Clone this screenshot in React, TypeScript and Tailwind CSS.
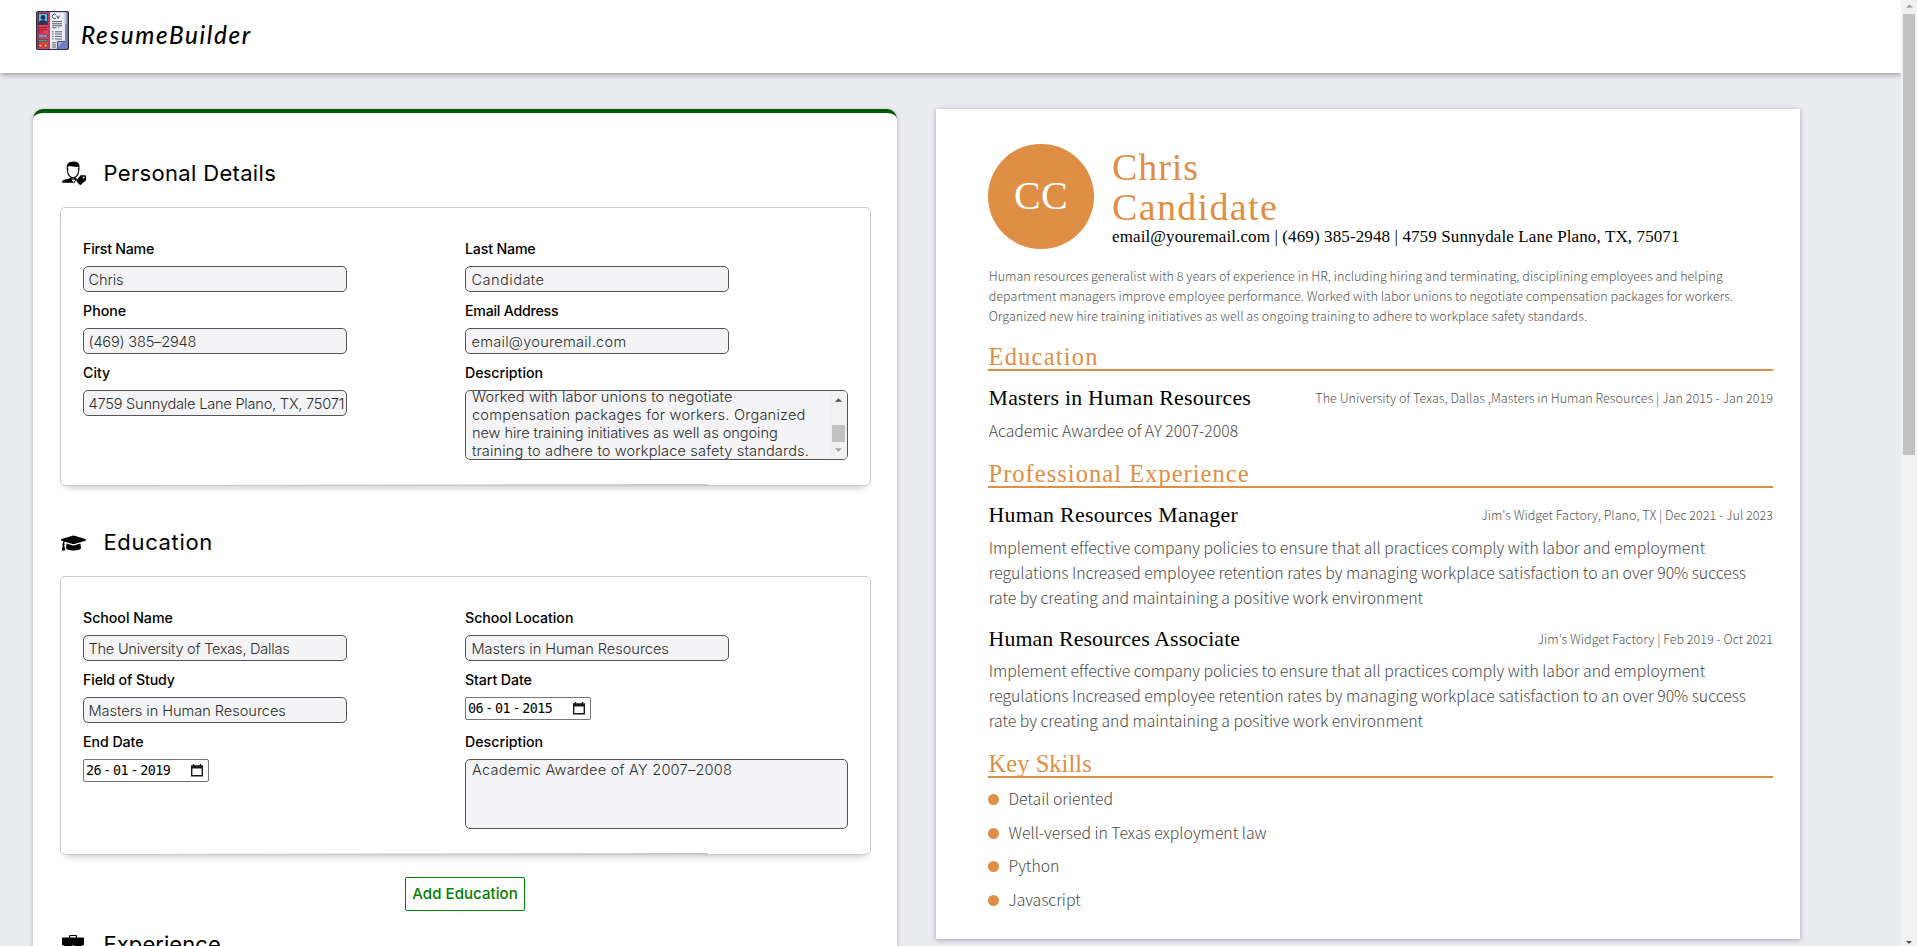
import React, { ReactNode } from 'react';
import { FaGraduationCap } from 'react-icons/fa';

function Logo() {
  return (
    <svg className="h-[39px] w-[33px] shrink-0" viewBox="0 0 33 39">
      <rect x="0.6" y="0.6" width="31.8" height="37.8" rx="1.2" fill="#7c85a6" stroke="#2f2b45" strokeWidth="1.2" />
      <rect x="13" y="1.2" width="16" height="36.6" fill="#eceff8" />
      <path d="M28.2 1.2h2.2v12h-2.2z" fill="#c3cadf" />
      <path d="M1.2 1.2h12.4v36.6H1.2z" fill="#ee3f58" />
      <path d="M1.2 1.2h2v36.6h-2z" fill="#b02a4c" />
      <path d="M13.2 1v37" stroke="#6a2747" strokeWidth="0.9" />
      <rect x="2.6" y="2.6" width="8.8" height="11" fill="#5fc0ea" stroke="#2f2b45" strokeWidth="0.8" />
      <circle cx="7" cy="6.4" r="2.4" fill="#2b3052" />
      <path d="M3 13.4v-1.6c0-2 2-2.8 4-2.8s4 .8 4 2.8v1.6z" fill="#2b3052" />
      <path d="M2.4 16.6h8.8M2.4 18.8h8.8M2.4 21h5.4" stroke="#7a1d3c" strokeWidth="0.9" />
      <rect x="2.6" y="24" width="8.6" height="2" fill="#6fd3ee" stroke="#2f2b45" strokeWidth="0.5" />
      <rect x="2.6" y="28.6" width="8.6" height="2" fill="#3fae77" stroke="#2f2b45" strokeWidth="0.5" />
      <circle cx="4.4" cy="34.6" r="1.7" fill="#f2b84b" stroke="#5c2038" strokeWidth="0.7" />
      <circle cx="9.6" cy="34.6" r="1.7" fill="#f2b84b" stroke="#5c2038" strokeWidth="0.7" />
      <path d="M20 3.6a2.3 2.3 0 1 0 0 3.6M20.8 4.6l1.3 3 1.3-3" fill="none" stroke="#3a3a4a" strokeWidth="0.9" />
      <path d="M16 10.6h10M16 12.8h10M16 14.8h10M16 16.8h4.4M22 16.8h1.2M16 20.8h1.6M19 20.8h7M16 23h1.6M19 23h7M16 25.4h1.6M19 25.4h7M16 28h1.6M19 28h7M16 31.8h4M16 34h4M16 36h4" stroke="#4a4a5a" strokeWidth="0.9" />
      <path d="M21.4 38v-7.6h7.6z" fill="#8fa4e4" stroke="#2f2b45" strokeWidth="0.8" strokeLinejoin="round" />
      <path d="M29 30.4V38h-7.6z" fill="#6d80cf" />
    </svg>
  );
}

function PersonTagIcon() {
  return (
    <svg className="-mt-[6px] h-6 w-6" viewBox="0 0 24 24">
      <path d="M5.6 6.8v3.4c0 2.8 2.4 6.6 5.4 6.6s5.6-3.8 5.6-6.6V6.8" fill="none" stroke="#000" strokeWidth="1.1" />
      <path d="M5 9.4C4.2 4.6 5.2 1.6 8.6 1c2.4-1 5.6-.8 7.2.6 1.8 1 2 4.4 1.4 7.8l-.8-3.6c-2.6.4-6.6-.2-8.8-.8L6 5.8z" />
      <path d="M0 21.8c0-2.6 1.6-3.2 4.2-3.5 2-.3 3.8-.7 4.6-1.7 1.4 1.3 3 1.3 4.4 0 .6.8 1.2 1.2 2 1.4L13 20.4v1.4z" />
      <path d="M9.4 18.4l2 3.2 1.9-2.8" fill="#fff" />
      <path d="M18.6 14.2h4.6c.4 0 .8.4.8.8v4.2l-5.2 4.5c-.4.3-.8.3-1.1 0l-3.2-3.4c-.3-.3-.3-.8 0-1.1z" />
      <circle cx="21.6" cy="16.5" r="0.9" fill="#fff" />
    </svg>
  );
}

function BriefcaseIcon() {
  return (
    <svg className="-mt-[5px] h-[20px] w-[22px]" viewBox="0 0 22 20">
      <path d="M7.6 3V1.2c0-.4.3-.7.7-.7h5.4c.4 0 .7.3.7.7V3" fill="none" stroke="#000" strokeWidth="1.2" />
      <path d="M1 2.4h20c.6 0 1 .4 1 1v6.4c-3.2 1.4-6.3 2.2-9.6 2.4V10.400H9.600v1.800C6.300 12 3.200 11.200 0 9.800V3.400c0-.6.400-1 1-1z" />
      <path d="M0 11.200c3.200 1.400 6.300 2.100 9.600 2.300v1.300h2.800v-1.300c3.300-.2 6.400-.9 9.600-2.300V18c0 .6-.4 1-1 1H1c-.6 0-1-.4-1-1z" />
    </svg>
  );
}

function CalendarIcon() {
  return (
    <svg className="h-[13px] w-3" viewBox="0 0 12 13">
      <path d="M0.7 2.2h10.6v9.6H.7z" fill="none" stroke="#1a1a1a" strokeWidth="1.4" />
      <path d="M0 1.4h12v3H0zM1.8 0h1.4v2H1.8zM8.8 0h1.4v2H8.8z" fill="#1a1a1a" />
    </svg>
  );
}

function Arrow({ down, className }: { down?: boolean; className: string }) {
  return (
    <svg className={className} viewBox="0 0 8 4">
      <path d={down ? 'M0 0h8L4 4z' : 'M0 4h8L4 0z'} fill="currentColor" />
    </svg>
  );
}

function SectionTitle({ icon, children, className }: { icon: ReactNode; children: ReactNode; className: string }) {
  return (
    <h2 className={`flex h-[30px] items-center text-[22px] leading-[30px] text-black ${className}`}>
      <span className="mt-1.5 ml-[2px] flex w-[41.5px] shrink-0">{icon}</span>
      {children}
    </h2>
  );
}

function FormBox({ children }: { children: ReactNode }) {
  return (
    <div className="relative h-[279px] rounded-[5px] border border-[#cbcbcb] pt-[31px] pl-[22px] shadow-[0_7px_7px_-6px_rgba(0,0,0,0.25)]">
      <div className="grid grid-cols-[382px_383px] auto-rows-[62px]">{children}</div>
      <div className="absolute bottom-0 left-[80px] h-px w-[567px] bg-linear-to-r from-transparent to-[#c4c4c4]" />
    </div>
  );
}

function Label({ children, tracking }: { children: ReactNode; tracking: string }) {
  return <span className={`mb-[7px] block h-5 text-[14.2px] leading-5 font-[450] whitespace-nowrap text-black ${tracking}`}>{children}</span>;
}

function Field({ label, lt, value, vt, pad = 'pl-[4.5px]' }: { label: string; lt: string; value: string; vt: string; pad?: string }) {
  return (
    <label className="block">
      <Label tracking={lt}>{label}</Label>
      <input
        className={`block h-[26px] w-[264px] rounded-[5px] border border-[#545457] bg-[#f4f4f7] pt-px text-[14.6px] font-light text-[#2e2e2e] outline-none ${pad} ${vt}`}
        defaultValue={value}
      />
    </label>
  );
}

function DateField({ label, lt, parts }: { label: string; lt: string; parts: [string, string, string] }) {
  return (
    <div>
      <Label tracking={lt}>{label}</Label>
      <div className="flex h-[23px] w-[126px] items-center justify-between rounded-[2px] border border-[#767676] bg-white pr-[5px] pl-[2px] text-black">
        <span className="mt-px flex gap-[2.2px] font-['DejaVu_Sans_Mono',monospace] text-[13.4px] tracking-[-0.5px]">
          <span>{parts[0]}</span>
          <span>-</span>
          <span>{parts[1]}</span>
          <span>-</span>
          <span>{parts[2]}</span>
        </span>
        <CalendarIcon />
      </div>
    </div>
  );
}

function TextBox({ lines, offset, scroll }: { lines: [string, string][]; offset: string; scroll?: boolean }) {
  return (
    <div>
      <Label tracking="tracking-[0.02px]">Description</Label>
      <div className="flex h-[70px] w-[383px] justify-between overflow-hidden rounded-[5px] border border-[#545457] bg-[#f4f4f7] text-[14.6px] leading-[18px] font-light text-[#2e2e2e]">
        <div className={`pl-[6px] whitespace-nowrap ${offset}`}>
          {lines.map(([t, c]) => (
            <div key={t} className={c}>
              {t}
            </div>
          ))}
        </div>
        {scroll && (
          <div className="flex w-[17px] flex-col items-center bg-[#f1f1f1]">
            <Arrow className="mt-[7px] h-1 w-[7px] text-[#505050]" />
            <div className="mt-[23px] h-[17px] w-[13px] bg-[#c1c1c1]" />
            <Arrow down className="mt-[6px] h-1 w-[7px] text-[#a3a3a3]" />
          </div>
        )}
      </div>
    </div>
  );
}

function ResumeHeading({ children, className }: { children: ReactNode; className: string }) {
  return (
    <h3 className={`h-[27px] border-b-2 border-[#df8e45] font-['Liberation_Serif',serif] text-[24.5px] leading-[26px] text-[#df8e45] ${className}`}>{children}</h3>
  );
}

function Entry({ title, tt, meta, body, className, bodyClass }: { title: string; tt: string; meta: string; body: string[]; className: string; bodyClass: string }) {
  return (
    <div className={className}>
      <div className="flex h-[26px] justify-between whitespace-nowrap">
        <span className={`pl-[0.5px] font-['Liberation_Serif',serif] text-[21.8px] leading-[26px] text-black ${tt}`}>{title}</span>
        <span className="mt-[3px] text-[12.6px] leading-5 font-light text-[#555]">{meta}</span>
      </div>
      <div className={`pl-[0.7px] text-[15.8px] leading-[25px] font-light tracking-[-0.012px] whitespace-nowrap text-[#484848] ${bodyClass}`}>
        {body.map((l) => (
          <div key={l}>{l}</div>
        ))}
      </div>
    </div>
  );
}

const duties = [
  'Implement effective company policies to ensure that all practices comply with labor and employment',
  'regulations Increased employee retention rates by managing workplace satisfaction to an over 90% success',
  'rate by creating and maintaining a positive work environment',
];

const skills = ['Detail oriented', 'Well-versed in Texas exployment law', 'Python', 'Javascript'];

export default function App() {
  return (
    <div className="flex h-[946px] w-[1917px] overflow-hidden bg-[#ebecf0] font-[Inter,sans-serif]">
      <div className="flex w-[1901px] flex-col overflow-hidden">
        <header className="relative z-10 flex h-[73px] shrink-0 bg-white pt-[11px] pl-9 shadow-[0_1px_6px_rgba(60,40,70,0.55)]">
          <Logo />
          <span className="ml-[12px] pt-[8.5px] font-[Lato,sans-serif] text-[24.2px] leading-[30px] font-medium tracking-[1.65px] text-black italic">ResumeBuilder</span>
        </header>

        <main className="flex items-start gap-[39px] pt-9 pl-[33px]">
          <section className="h-[980px] w-[864px] shrink-0 rounded-[10px] border-t-4 border-[#005a05] bg-white pt-[45px] pr-[26px] pl-[27px] shadow-[0_1px_4px_rgba(60,50,90,0.35)]">
            <SectionTitle className="mb-[19px] tracking-[0.33px]" icon={<PersonTagIcon />}>
              Personal Details
            </SectionTitle>
            <FormBox>
              <Field label="First Name" lt="tracking-[-0.23px]" value="Chris" vt="tracking-[-0.11px]" />
              <Field label="Last Name" lt="tracking-[-0.17px]" value="Candidate" vt="tracking-[0.45px]" pad="pl-[5.5px]" />
              <Field label="Phone" lt="tracking-[0.03px]" value="(469) 385–2948" vt="tracking-[-0.2px]" />
              <Field label="Email Address" lt="tracking-[-0.24px]" value="email@youremail.com" vt="tracking-[0.26px]" pad="pl-[5.5px]" />
              <Field label="City" lt="tracking-[0px]" value="4759 Sunnydale Lane Plano, TX, 75071" vt="tracking-[-0.23px]" />
              <TextBox
                scroll
                offset="mt-[-3px]"
                lines={[
                  ['Worked with labor unions to negotiate', 'tracking-[0.12px]'],
                  ['compensation packages for workers. Organized', 'tracking-[0.2px]'],
                  ['new hire training initiatives as well as ongoing', 'tracking-[-0.08px]'],
                  ['training to adhere to workplace safety standards.', 'tracking-[0.13px]'],
                ]}
              />
            </FormBox>

            <SectionTitle className="mt-[41px] mb-[19px] tracking-[0.65px]" icon={<FaGraduationCap className="-mt-[4px] -ml-px h-[20px] w-[25px]" />}>
              Education
            </SectionTitle>
            <FormBox>
              <Field label="School Name" lt="tracking-[-0.03px]" value="The University of Texas, Dallas" vt="tracking-[-0.26px]" />
              <Field label="School Location" lt="tracking-[-0.03px]" value="Masters in Human Resources" vt="tracking-[-0.05px]" pad="pl-[5.5px]" />
              <Field label="Field of Study" lt="tracking-[-0.13px]" value="Masters in Human Resources" vt="tracking-[-0.05px]" />
              <DateField label="Start Date" lt="tracking-[-0.1px]" parts={['06', '01', '2015']} />
              <DateField label="End Date" lt="tracking-[-0.06px]" parts={['26', '01', '2019']} />
              <TextBox offset="mt-px" lines={[['Academic Awardee of AY 2007–2008', 'tracking-[0.2px]']]} />
            </FormBox>

            <button className="mt-[22px] ml-[345px] block h-[34px] w-[120px] rounded-[2px] border border-[#008000] text-[15px] font-medium tracking-[0.06px] whitespace-nowrap text-[#008000]">
              Add Education
            </button>

            <SectionTitle className="mt-[18px] tracking-[0.06px]" icon={<BriefcaseIcon />}>
              Experience
            </SectionTitle>
          </section>

          <section className="h-[830px] w-[864px] shrink-0 bg-white pt-[35px] pr-[27px] pl-[52px] font-['Noto_Sans_CJK_SC',sans-serif] shadow-[0_1px_5px_rgba(60,50,90,0.4)]">
            <div className="flex gap-[18px] font-['Liberation_Serif',serif]">
              <div className="flex h-[105px] w-[106px] shrink-0 items-center justify-center rounded-full bg-[#df8e45] pb-[2px] text-[40px] tracking-[0.3px] text-white">CC</div>
              <div className="mt-[3px] whitespace-nowrap">
                <div className="text-[38px] leading-10 tracking-[0.9px] text-[#df8e45]">Chris</div>
                <div className="text-[38px] leading-10 tracking-[1.35px] text-[#df8e45]">Candidate</div>
                <div className="text-[17px] leading-5 tracking-[0.115px] text-black">email@youremail.com | (469) 385-2948 | 4759 Sunnydale Lane Plano, TX, 75071</div>
              </div>
            </div>

            <div className="mt-[17px] pl-[0.7px] text-[12.6px] leading-5 font-light tracking-[0.01px] whitespace-nowrap text-[#555]">
              <div>Human resources generalist with 8 years of experience in HR, including hiring and terminating, disciplining employees and helping</div>
              <div>department managers improve employee performance. Worked with labor unions to negotiate compensation packages for workers.</div>
              <div>Organized new hire training initiatives as well as ongoing training to adhere to workplace safety standards.</div>
            </div>

            <ResumeHeading className="mt-[18px] pl-[0.5px] tracking-[1.2px]">Education</ResumeHeading>
            <Entry
              className="mt-[14px]"
              bodyClass="mt-[7px]"
              title="Masters in Human Resources"
              tt="tracking-[0.25px]"
              meta="The University of Texas, Dallas ,Masters in Human Resources | Jan 2015 - Jan 2019"
              body={['Academic Awardee of AY 2007-2008']}
            />

            <ResumeHeading className="mt-[18px] pl-[0.5px] tracking-[1.03px]">Professional Experience</ResumeHeading>
            <Entry
              className="mt-[14px]"
              bodyClass="mt-[7px]"
              title="Human Resources Manager"
              tt="tracking-[0.32px]"
              meta="Jim's Widget Factory, Plano, TX | Dec 2021 - Jul 2023"
              body={duties}
            />
            <Entry
              className="mt-4"
              bodyClass="mt-[6px]"
              title="Human Resources Associate"
              tt="tracking-[0.14px]"
              meta="Jim's Widget Factory | Feb 2019 - Oct 2021"
              body={duties}
            />

            <ResumeHeading className="mt-[18px] pl-[0.5px] tracking-[0.05px]">Key Skills</ResumeHeading>
            <ul className="mt-2 flex flex-col gap-[8.6px] text-[15.8px] leading-[25px] font-light tracking-[-0.02px] text-[#484848]">
              {skills.map((s) => (
                <li key={s} className="flex items-center gap-[9.5px]">
                  <span className="mt-0.5 h-[11px] w-[11px] rounded-full bg-[#df8e45]" />
                  {s}
                </li>
              ))}
            </ul>
          </section>
        </main>
      </div>

      <div className="flex w-4 flex-col items-center justify-between bg-[#f1f1f1]">
        <div className="flex flex-col items-center">
          <Arrow className="mt-[4px] h-1 w-[7px] text-[#a3a3a3]" />
          <div className="mt-[6px] h-[441px] w-3 bg-[#c1c1c1]" />
        </div>
        <Arrow down className="mb-[2px] h-[3px] w-1.5 text-[#505050]" />
      </div>
    </div>
  );
}
